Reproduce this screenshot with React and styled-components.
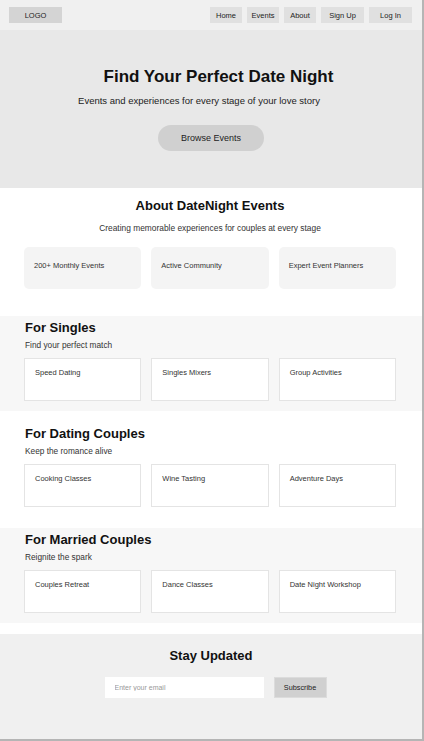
import styled, { createGlobalStyle } from "styled-components";

const GlobalStyle = createGlobalStyle`
  body {
    margin: 0;
    font-family: "Liberation Sans", Arial, sans-serif;
    background: #ffffff;
  }
  * {
    box-sizing: border-box;
  }
`;

const Page = styled.div`
  width: 424px;
  min-height: 741px;
  border-right: 2px solid #b5b5b5;
  border-bottom: 2px solid #b5b5b5;
  display: flex;
  flex-direction: column;
  color: #111;
`;

const Header = styled.header`
  height: 30px;
  background: #f0f0f0;
  display: flex;
  align-items: center;
  justify-content: space-between;
  padding: 0 10px 0 9px;
`;

const Logo = styled.div`
  width: 53px;
  height: 16px;
  background: #d4d4d4;
  font-size: 7.5px;
  display: flex;
  align-items: center;
  justify-content: center;
  color: #222;
`;

const Nav = styled.nav`
  display: flex;
  gap: 5px;
`;

const NavItem = styled.a`
  width: ${(p) => (p.$wide ? "43px" : "32px")};
  height: 16px;
  background: #e0e0e0;
  font-size: 7.5px;
  color: #222;
  display: flex;
  align-items: center;
  justify-content: center;
  text-decoration: none;
`;

const Hero = styled.section`
  background: #e8e8e8;
  padding: 37px 20px;
  display: flex;
  flex-direction: column;
  align-items: center;
  text-align: center;
`;

const HeroTitle = styled.h1`
  margin: 0 0 0 15px;
  font-size: 17px;
  line-height: 20px;
  font-weight: 700;
  color: #111;
`;

const HeroText = styled.p`
  margin: 8px 24px 0 0;
  font-size: 9.5px;
  line-height: 11px;
  color: #222;
`;

const PillButton = styled.button`
  margin-top: 19px;
  width: 106px;
  height: 26px;
  border: none;
  border-radius: 13px;
  background: #d0d0d0;
  font-family: inherit;
  font-size: 9px;
  color: #222;
`;

const About = styled.section`
  padding: 10px 26px 27px 24px;
  text-align: center;
`;

const CenterTitle = styled.h2`
  margin: 0;
  font-size: 13px;
  line-height: 15px;
  font-weight: 700;
`;

const AboutText = styled.p`
  margin: 10px 0 0;
  font-size: 8.4px;
  line-height: 10px;
  color: #333;
`;

const Grid = styled.div`
  display: grid;
  grid-template-columns: repeat(3, 1fr);
  gap: 10px;
  margin-top: ${(p) => p.$top}px;
`;

const StatCard = styled.div`
  height: 42px;
  background: #f4f4f4;
  border-radius: 5px;
  padding: 14px 10px;
  text-align: left;
  font-size: 7.5px;
  line-height: 9px;
  color: #333;
`;

const Category = styled.section`
  background: ${(p) => (p.$shaded ? "#f7f7f7" : "#ffffff")};
  padding: 4px 26px 10px 24px;
  margin-bottom: 11px;
`;

const SectionTitle = styled.h2`
  margin: 0 0 0 1px;
  font-size: 13px;
  line-height: 15px;
  font-weight: 700;
`;

const SectionText = styled.p`
  margin: 5px 0 0 1px;
  font-size: 8.3px;
  line-height: 10px;
  color: #333;
`;

const EventCard = styled.div`
  height: 43px;
  background: #ffffff;
  border: 1px solid #e4e4e4;
  padding: 9px 10px;
  font-size: 7.5px;
  line-height: 9px;
  color: #333;
`;

const Newsletter = styled.section`
  flex: 1;
  background: #f0f0f0;
  padding: 14px 25px 20px;
  text-align: center;
`;

const Form = styled.form`
  margin-top: 14px;
  display: flex;
  justify-content: center;
  gap: 10px;
  padding-left: 9px;
`;

const EmailInput = styled.input`
  width: 159px;
  height: 21px;
  border: none;
  background: #ffffff;
  padding: 0 10px;
  font-family: inherit;
  font-size: 7px;
  color: #333;
  &::placeholder {
    color: #999;
  }
`;

const SubscribeButton = styled.button`
  width: 53px;
  height: 21px;
  background: #d0d0d0;
  border: 1px solid #dcdcdc;
  font-family: inherit;
  font-size: 7.3px;
  color: #222;
`;

const categories = [
  {
    title: "For Singles",
    text: "Find your perfect match",
    items: ["Speed Dating", "Singles Mixers", "Group Activities"],
    shaded: true,
  },
  {
    title: "For Dating Couples",
    text: "Keep the romance alive",
    items: ["Cooking Classes", "Wine Tasting", "Adventure Days"],
    shaded: false,
  },
  {
    title: "For Married Couples",
    text: "Reignite the spark",
    items: ["Couples Retreat", "Dance Classes", "Date Night Workshop"],
    shaded: true,
  },
];

const App = () => {
  return (
    <>
      <GlobalStyle />
      <Page>
        <Header>
          <Logo>LOGO</Logo>
          <Nav>
            <NavItem>Home</NavItem>
            <NavItem>Events</NavItem>
            <NavItem>About</NavItem>
            <NavItem $wide>Sign Up</NavItem>
            <NavItem $wide>Log In</NavItem>
          </Nav>
        </Header>

        <Hero>
          <HeroTitle>Find Your Perfect Date Night</HeroTitle>
          <HeroText>Events and experiences for every stage of your love story</HeroText>
          <PillButton>Browse Events</PillButton>
        </Hero>

        <About>
          <CenterTitle>About DateNight Events</CenterTitle>
          <AboutText>Creating memorable experiences for couples at every stage</AboutText>
          <Grid $top={14}>
            <StatCard>200+ Monthly Events</StatCard>
            <StatCard>Active Community</StatCard>
            <StatCard>Expert Event Planners</StatCard>
          </Grid>
        </About>

        {categories.map((cat) => (
          <Category key={cat.title} $shaded={cat.shaded}>
            <SectionTitle>{cat.title}</SectionTitle>
            <SectionText>{cat.text}</SectionText>
            <Grid $top={8}>
              {cat.items.map((item) => (
                <EventCard key={item}>{item}</EventCard>
              ))}
            </Grid>
          </Category>
        ))}

        <Newsletter>
          <CenterTitle>Stay Updated</CenterTitle>
          <Form onSubmit={(e) => e.preventDefault()}>
            <EmailInput placeholder="Enter your email" />
            <SubscribeButton>Subscribe</SubscribeButton>
          </Form>
        </Newsletter>
      </Page>
    </>
  );
};

export default App;
